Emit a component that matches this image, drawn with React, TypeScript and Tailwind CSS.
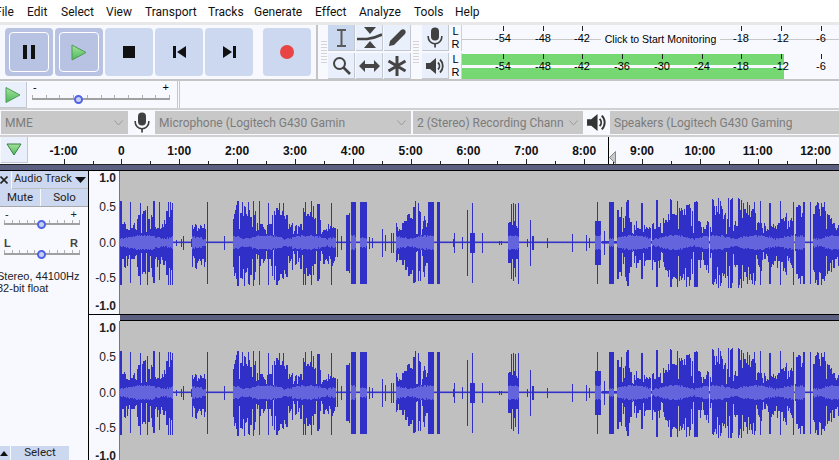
import React from "react";

const MENU: [string, number][] = [["File", -5], ["Edit", 27], ["Select", 61], ["View", 106], ["Transport", 145], ["Tracks", 208], ["Generate", 254], ["Effect", 315], ["Analyze", 359], ["Tools", 414], ["Help", 455]];

function rng(seed: number) {
  let s = seed;
  return () => {
    s = (s * 1664525 + 1013904223) % 4294967296;
    return s / 4294967296;
  };
}

const SEGS: [number, number, number][] = [
  [120, 172, 42], [176, 176, 3], [181, 181, 4], [183, 183, 7], [191, 191, 4], [192, 205, 42], [207, 207, 41], [224, 224, 7],
  [233, 256, 43], [257, 335, 42], [337, 337, 14], [341, 341, 7], [346, 348, 28], [349, 349, 30], [351, 355, 41], [360, 366, 41],
  [369, 369, 6], [372, 372, 5], [382, 382, 14], [385, 385, 8], [391, 391, 10], [393, 393, 10], [396, 427, 43], [428, 433, 41],
  [437, 439, 41], [453, 453, 4], [454, 454, 10], [462, 462, 6], [467, 467, 33], [470, 474, 10], [472, 472, 40], [482, 482, 10],
  [499, 499, 2], [501, 501, 2], [508, 518, 41], [527, 527, 4], [530, 530, 23], [532, 533, 7], [547, 547, 5], [572, 572, 9],
  [586, 586, 8], [589, 589, 5], [595, 600, 22], [597, 597, 41], [604, 604, 12], [609, 613, 41], [617, 650, 43], [652, 708, 44],
  [710, 742, 45], [743, 793, 42], [795, 804, 43], [810, 810, 41], [813, 839, 42],
];

function buildWave() {
  const r = rng(7);
  let peak = "";
  let rms = "";
  for (const [a, b, amp] of SEGS) {
    const wide = b - a > 6;
    let hold = 0;
    let cur = amp;
    let curB = amp;
    for (let x = a; x <= b; x++) {
      if (hold <= 0) {
        const v = r();
        const slow = 0.72 + 0.28 * Math.sin(x / 7 + Math.sin(x / 23) * 2);
        let f = 1;
        if (wide) {
          if (v < 0.16) f = 0.18 + r() * 0.2;
          else if (v < 0.3) f = 0.92 + r() * 0.08;
          else f = slow * (0.62 + r() * 0.38);
        }
        cur = amp * f;
        curB = amp * (wide ? (v < 0.16 ? f : Math.min(1, Math.max(0.4, f + (r() - 0.35) * 0.35))) : 1);
        hold = wide ? (v < 0.16 ? 0 : Math.floor(r() * 2.5)) : 9;
      }
      hold--;
      const px = x - 120 + 0.5;
      peak += `M${px} ${(71.5 - cur).toFixed(1)}V${(71.5 + curB).toFixed(1)}`;
      if (amp >= 20 && b - a >= 3) {
        const h = 2.5 + 3.5 * Math.abs(Math.sin(x / 13)) + r() * 2;
        rms += `M${px} ${(71.5 - h).toFixed(1)}V${(71.5 + h).toFixed(1)}`;
      }
    }
  }
  return { peak, rms };
}
const WAVE = buildWave();

function Wave() {
  return (
    <svg width="719" height="143" className="block">
      <rect x="0" y="70.5" width="719" height="1.6" fill="#3232c8" />
      <rect x="482" y="70" width="120" height="2.6" fill="#3232c8" />
      <path d={WAVE.peak} stroke="#3030c8" strokeWidth="1" fill="none" shapeRendering="crispEdges" />
      <path d={WAVE.rms} stroke="#6464dc" strokeWidth="1" fill="none" shapeRendering="crispEdges" />
    </svg>
  );
}

function Track() {
  return (
    <div className="flex h-[143px] shrink-0">
      <div className="w-[31px] shrink-0 flex flex-col items-end pr-[3px] text-[12px] leading-[14px] text-[#222] font-['Liberation_Sans',sans-serif] border-r border-[#777]">
        <span className="font-bold">1.0</span>
        <span className="mt-[15px]">0.5</span>
        <span className="mt-[22px]">0.0</span>
        <span className="mt-[21px]">-0.5</span>
        <span className="mt-[14px] font-bold">-1.0</span>
      </div>
      <div className="bg-[#c0c0c0] flex-1 overflow-hidden">
        <Wave />
      </div>
    </div>
  );
}

function Btn({ pressed, children, cls }: { pressed?: boolean; children: React.ReactNode; cls?: string }) {
  return (
    <div className={`w-[48px] h-[48px] rounded-[4px] flex items-center justify-center ${pressed ? "bg-[#b8c2e2] p-[4px]" : "bg-[#ccd8f0]"} ${cls ?? ""}`}>
      {pressed ? (
        <div className="w-full h-full rounded-[4px] border border-white flex items-center justify-center">{children}</div>
      ) : children}
    </div>
  );
}

function PlayTri({ w = 16, h = 17 }: { w?: number; h?: number }) {
  return (
    <svg width={w} height={h} viewBox="0 0 16 17">
      <defs>
        <linearGradient id="gp" x1="0" y1="0" x2="0" y2="1">
          <stop offset="0" stopColor="#a4e49a" />
          <stop offset="1" stopColor="#4cb85a" />
        </linearGradient>
      </defs>
      <path d="M1 1 L15 8.5 L1 16 Z" fill="url(#gp)" stroke="#4f9a5a" strokeWidth="1" />
    </svg>
  );
}

function Grip({ cls }: { cls?: string }) {
  return (
    <div className={`w-[7px] shrink-0 h-full flex flex-col justify-center gap-[2px] items-center py-[4px] ${cls ?? ""}`}>
      {Array.from({ length: 8 }).map((_, i) => (
        <div key={i} className="w-[6px] h-px bg-[#d4d4d4]" />
      ))}
    </div>
  );
}

function ToolBtn({ on, children }: { on?: boolean; children: React.ReactNode }) {
  return (
    <div className={`w-[27px] h-[26px] flex items-center justify-center border-b border-r border-[#c4c8d0] ${on ? "bg-[#c9d7ef]" : "bg-[#eaf0fb]"}`}>
      {children}
    </div>
  );
}

function Mic({ c = "#404040" }: { c?: string }) {
  return (
    <svg width="16" height="21" viewBox="0 0 16 21">
      <rect x="4" y="0.5" width="8" height="13" rx="4" fill={c} />
      <path d="M1.2 9 V10 A6.8 6.8 0 0 0 14.8 10 V9" stroke={c} strokeWidth="1.6" fill="none" />
      <rect x="7.2" y="16" width="1.7" height="4.5" fill={c} />
    </svg>
  );
}

function Speaker({ c = "#404040", w = 20 }: { c?: string; w?: number }) {
  return (
    <svg width={w} height={w} viewBox="0 0 20 20">
      <path d="M1 7 H5 L11 2 V18 L5 13 H1 Z" fill={c} />
      <path d="M13 6.5 A5 5 0 0 1 13 13.5" stroke={c} strokeWidth="1.8" fill="none" />
      <path d="M15 3.5 A9 9 0 0 1 15 16.5" stroke={c} strokeWidth="1.8" fill="none" />
    </svg>
  );
}

const METER = [["-54", 503], ["-48", 543], ["-42", 582], ["-36", 622], ["-30", 662], ["-24", 702], ["-18", 741], ["-12", 781], ["-6", 821]] as [string, number][];

function Meter({ top }: { top?: boolean }) {
  const shown = top ? METER.filter(([t]) => !["-36", "-30", "-24"].includes(t)) : METER;
  return (
    <div className="flex h-[26px] shrink-0">
      <div className="w-[12px] shrink-0 flex flex-col items-center justify-between text-[11px] leading-[13px] text-black font-['Liberation_Sans',sans-serif] border-r border-[#d0d0d0] bg-[#f8f9ff]">
        <span>L</span>
        <span>R</span>
      </div>
      <div className="flex-1 relative bg-[#f8f9ff] overflow-hidden font-['Liberation_Sans',sans-serif] text-[11px] text-black">
        {top ? (
          <div className="absolute left-0 right-0 top-[14px] h-px bg-[#c8c8c8]" />
        ) : (
          <>
            <div className="absolute left-0 w-[322px] top-[1px] h-[11px] bg-[#76d872]" />
            <div className="absolute left-0 w-[322px] top-[15px] h-[11px] bg-[#76d872]" />
          </>
        )}
        {shown.map(([t, x]) => (
          <React.Fragment key={t}>
            <div className="absolute top-[1px] w-px h-[5px] bg-[#222]" style={{ left: x - 462 }} />
            <span className="absolute top-[7px] leading-[13px] -translate-x-1/2" style={{ left: x - 462 }}>{t}</span>
          </React.Fragment>
        ))}
        {top && (
          <div className="absolute left-[139px] top-[7px] w-[119px] h-[14px] bg-[#f8f9ff] flex items-center justify-center text-[10.5px] leading-[14px]">
            Click to Start Monitoring
          </div>
        )}
      </div>
    </div>
  );
}

function Slider({ w, thumb, ticks }: { w: number; thumb: number; ticks: number }) {
  return (
    <div className="relative h-[12px]" style={{ width: w }}>
      <div className="absolute left-0 right-0 top-[5px] h-[2px] bg-[#a0a0a0]" />
      {Array.from({ length: ticks + 1 }).map((_, i) => (
        <div key={i} className="absolute top-[2px] w-px h-[3px] bg-[#b0b0b0]" style={{ left: (i * (w - 1)) / ticks }} />
      ))}
      <div className="absolute top-[1.5px] w-[9px] h-[9px] rounded-full border-[2.5px] border-[#4f62e8] bg-[#c8d0f0]" style={{ left: thumb - 4 }} />
    </div>
  );
}

function Combo({ w, text, chevron = true }: { w: number; text: string; chevron?: boolean }) {
  return (
    <div className="h-[23px] shrink-0 bg-[#c8c8c8] flex items-center pl-[4px] overflow-hidden relative text-[#7c7c7c] text-[12px] font-['Roboto',sans-serif] whitespace-nowrap" style={{ width: w }}>
      <span className="block overflow-hidden" style={{ maxWidth: chevron ? w - 18 : w - 6 }}>{text}</span>
      {chevron && (
        <svg width="9" height="6" viewBox="0 0 9 6" className="absolute right-[5px] top-[9px]">
          <path d="M0.5 0.5 L4.5 5 L8.5 0.5" stroke="#9a9a9a" fill="none" />
        </svg>
      )}
    </div>
  );
}

const LABELS = ["-1:00", "0", "1:00", "2:00", "3:00", "4:00", "5:00", "6:00", "7:00", "8:00", "9:00", "10:00", "11:00", "12:00"];

function Ruler() {
  const tick = (i: number) => 63.5 + i * 57.85 - 28;
  return (
    <div className="flex-1 relative overflow-hidden font-['Liberation_Sans',sans-serif] font-bold text-[12px] text-[#111]">
      {LABELS.map((t, i) => (
        <React.Fragment key={t}>
          <span className="absolute top-[7px] leading-[14px] -translate-x-1/2" style={{ left: tick(i) }}>{t}</span>
          <div className="absolute bottom-0 w-px h-[5px] bg-[#222]" style={{ left: tick(i) }} />
          <div className="absolute bottom-0 w-px h-[3px] bg-[#222]" style={{ left: tick(i) + 29 }} />
        </React.Fragment>
      ))}
      <div className="absolute left-[580px] top-0 bottom-0 w-px bg-black" />
      <svg width="7" height="13" viewBox="0 0 7 13" className="absolute left-[581px] bottom-0">
        <path d="M6.5 0.5 V12.5 L0.5 6.5 Z" fill="#c8c8c8" stroke="#888" />
      </svg>
    </div>
  );
}

export default function App() {
  return (
    <div className="w-[839px] h-[460px] overflow-hidden flex flex-col bg-[#f8f9ff] font-['Roboto',sans-serif]">
      {/* menu */}
      <div className="h-[22px] shrink-0 bg-white relative text-[12px] text-[#111]">
        {MENU.map(([t, x]) => (
          <span key={t} className="absolute top-[4px] leading-[16px]" style={{ left: x }}>{t}</span>
        ))}
      </div>
      {/* toolbars */}
      <div className="h-[59px] shrink-0 flex border-t-[3px] border-[#e8e8e8] border-b-2 border-b-[#c4c4c4]">
        <div className="w-[318px] shrink-0 flex items-center pl-[5px] gap-[2px] border-r-2 border-[#c4c4c4] mr-[2px]">
          <Btn pressed>
            <svg width="12" height="14" viewBox="0 0 12 14"><rect width="4" height="14" fill="#111" /><rect x="8" width="4" height="14" fill="#111" /></svg>
          </Btn>
          <Btn pressed><PlayTri /></Btn>
          <Btn><div className="w-[12px] h-[12px] bg-[#111]" /></Btn>
          <Btn>
            <svg width="13" height="12" viewBox="0 0 13 12"><rect width="3" height="12" fill="#111" /><path d="M13 0 V12 L4 6 Z" fill="#111" /></svg>
          </Btn>
          <Btn>
            <svg width="13" height="12" viewBox="0 0 13 12"><path d="M0 0 V12 L9 6 Z" fill="#111" /><rect x="10" width="3" height="12" fill="#111" /></svg>
          </Btn>
          <Btn cls="ml-[8px]"><div className="w-[14px] h-[14px] rounded-full bg-[#e84444]" /></Btn>
        </div>
        <Grip cls="mr-[1px]" />
        <div className="w-[83px] shrink-0 grid grid-cols-3 content-start gap-y-[2px] gap-x-[1px]">
          <ToolBtn on>
            <svg width="11" height="18" viewBox="0 0 11 18"><path d="M1 1 H10 M5.5 1 V17 M1 17 H10" stroke="#5a5a5a" strokeWidth="2" fill="none" /></svg>
          </ToolBtn>
          <ToolBtn>
            <svg width="25" height="21" viewBox="0 0 25 21"><path d="M7 0 H19 L13 7 Z M7 21 H19 L13 14 Z" fill="#444" /><path d="M0 12 H10 Q18 11 25 7.5" stroke="#444" strokeWidth="2.6" fill="none" /></svg>
          </ToolBtn>
          <ToolBtn>
            <svg width="19" height="19" viewBox="0 0 19 19"><path d="M1 18 L2 13 L13 2 Q15 0.5 17 2 Q18.5 4 17 6 L6 17 Z" fill="#444" /></svg>
          </ToolBtn>
          <ToolBtn>
            <svg width="19" height="19" viewBox="0 0 19 19"><circle cx="7.5" cy="7.5" r="5.5" stroke="#444" strokeWidth="2" fill="none" /><path d="M11.5 11.5 L18 18" stroke="#444" strokeWidth="2.6" /></svg>
          </ToolBtn>
          <ToolBtn>
            <svg width="21" height="12" viewBox="0 0 21 12"><path d="M0 6 L6 0 V4 H15 V0 L21 6 L15 12 V8 H6 V12 Z" fill="#444" /></svg>
          </ToolBtn>
          <ToolBtn>
            <svg width="20" height="20" viewBox="0 0 20 20"><path d="M10 0 V20 M1.5 5 L18.5 15 M18.5 5 L1.5 15" stroke="#444" strokeWidth="3" /></svg>
          </ToolBtn>
        </div>
        <Grip cls="ml-[1px] mr-[3px]" />
        <div className="w-[27px] shrink-0 flex flex-col gap-[2px] mr-[1px]">
          <ToolBtn><Mic /></ToolBtn>
          <ToolBtn><Speaker /></ToolBtn>
        </div>
        <div className="flex-1 flex flex-col gap-[2px]">
          <Meter top />
          <Meter />
        </div>
      </div>
      {/* transcription row */}
      <div className="h-[29px] shrink-0 flex border-b-2 border-[#d0d0d0]">
        <div className="w-[27px] h-[26px] mt-[1px] bg-[#eaf0fb] border-r border-b border-[#c4c8d0] flex items-center justify-center">
          <PlayTri w={16} h={18} />
        </div>
        <div className="w-[138px] ml-[5px] shrink-0 flex flex-col">
          <div className="flex justify-between px-[1px] h-[11px] text-[11px] leading-[11px] text-black font-['Liberation_Sans',sans-serif] mt-[1px]">
            <span>-</span>
            <span>+</span>
          </div>
          <Slider w={138} thumb={46} ticks={10} />
        </div>
        <div className="w-[3px] ml-[7px] border-x border-[#c8c8c8] h-full" />
      </div>
      {/* device row */}
      <div className="h-[27px] shrink-0 flex items-center pl-[1px] border-b-2 border-[#d0d0d0]">
        <Combo w={127} text="MME" />
        <div className="w-[27px] shrink-0 flex justify-center"><Mic /></div>
        <Combo w={256} text="Microphone (Logitech G430 Gamin" />
        <div className="w-[2px] shrink-0" />
        <Combo w={170} text="2 (Stereo) Recording Chann" />
        <div className="w-[27px] shrink-0 flex justify-center"><Speaker c="#333" w={21} /></div>
        <Combo w={229} text="Speakers (Logitech G430 Gaming" chevron={false} />
      </div>
      {/* ruler */}
      <div className="h-[27px] shrink-0 flex">
        <div className="w-[27px] ml-px h-[26px] bg-[#eaf0fb] border-r border-b border-[#c4c8d0] flex items-center justify-center">
          <svg width="16" height="13" viewBox="0 0 16 13">
            <defs>
              <linearGradient id="gd" x1="0" y1="0" x2="0" y2="1"><stop offset="0" stopColor="#a4e49a" /><stop offset="1" stopColor="#4cb85a" /></linearGradient>
            </defs>
            <path d="M1 1 H15 L8 12 Z" fill="url(#gd)" stroke="#3c7a46" />
          </svg>
        </div>
        <Ruler />
      </div>
      {/* band */}
      <div className="h-[7px] shrink-0 bg-[#5c6080] border-t border-[#222] border-b border-b-black" />
      {/* tracks */}
      <div className="flex-1 flex min-h-0 overflow-hidden">
        <div className="w-[89px] shrink-0 border-r border-black flex flex-col font-['Liberation_Sans',sans-serif] text-[11px] text-[#222] h-full">
          <div className="flex h-[18px] shrink-0 gap-[1px]">
            <div className="w-[11px] bg-[#ccd8f0] flex items-center justify-start overflow-hidden">
              <svg width="8" height="8" viewBox="0 0 8 8"><path d="M0.5 0.5 L7.5 7.5 M7.5 0.5 L0.5 7.5" stroke="#222" strokeWidth="1.6" /></svg>
            </div>
            <div className="flex-1 bg-[#ccd8f0] flex items-center justify-between pl-[2px] pr-[2px] border-b border-[#c0c0c0] font-['Roboto',sans-serif] whitespace-nowrap">
              <span className="text-[11px]">Audio Track</span>
              <svg width="11" height="6" viewBox="0 0 11 6" className="shrink-0"><path d="M0 0 H11 L5.5 6 Z" fill="#111" /></svg>
            </div>
          </div>
          <div className="flex h-[18px] shrink-0 gap-[1px] border-b border-[#a8a8a8] font-['Roboto',sans-serif] text-[11.5px]">
            <div className="w-[40px] bg-[#ccd8f0] flex items-center justify-center">Mute</div>
            <div className="flex-1 bg-[#ccd8f0] flex items-center justify-center">Solo</div>
          </div>
          <div className="flex justify-between pl-[5px] pr-[11px] h-[11px] text-[11px] leading-[14px]"><span>-</span><span>+</span></div>
          <div className="ml-[4px] shrink-0"><Slider w={76} thumb={37} ticks={10} /></div>
          <div className="flex justify-between pl-[4px] pr-[10px] mt-[6px] h-[14px] shrink-0 leading-[14px] font-bold text-[#444]"><span>L</span><span>R</span></div>
          <div className="ml-[4px] mt-[-2px] shrink-0"><Slider w={76} thumb={37} ticks={10} /></div>
          <div className="ml-[-3px] mt-[10px] leading-[12px] whitespace-nowrap text-[11px]">Stereo, 44100Hz</div>
          <div className="ml-[-3px] leading-[12px] whitespace-nowrap text-[11px]">32-bit float</div>
          <div className="flex-1" />
          <div className="flex h-[14px] shrink-0 gap-[1px]">
            <div className="w-[10px] bg-[#ccd8f0] flex items-center justify-start overflow-hidden">
              <svg width="8" height="6" viewBox="0 0 8 6" className="shrink-0"><path d="M0 6 H8 L4 1 Z" fill="#111" /></svg>
            </div>
            <div className="w-[58px] bg-[#ccd8f0] flex items-center justify-center font-['Roboto',sans-serif] text-[11.5px]">Select</div>
          </div>
        </div>
        <div className="flex-1 flex flex-col min-w-0">
          <Track />
          <div className="h-[1px] shrink-0 bg-black" />
          <div className="flex shrink-0 h-[6px]">
            <div className="w-[31px] shrink-0" />
            <div className="flex-1 bg-[#5c6080] border-b border-black" />
          </div>
          <Track />
        </div>
      </div>
    </div>
  );
}
